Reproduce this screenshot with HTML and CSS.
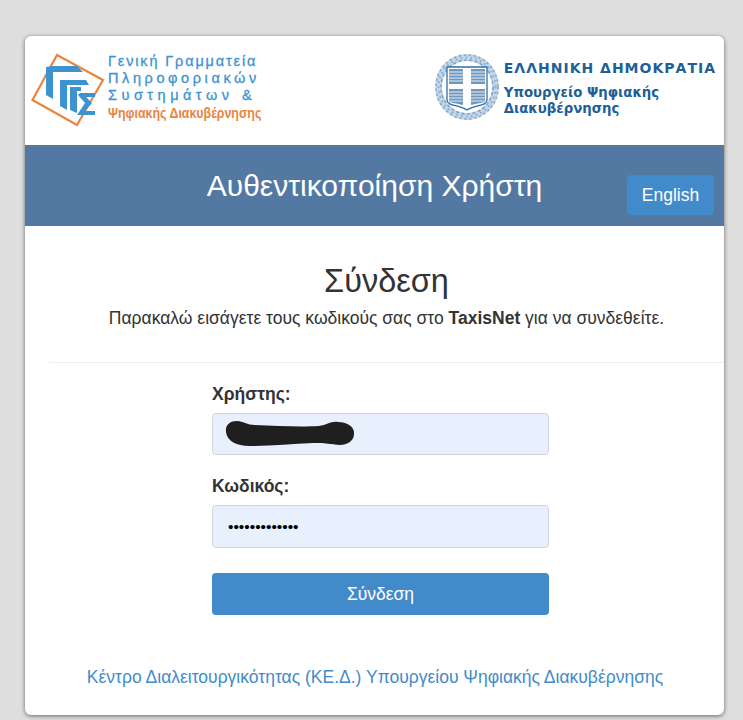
FILE: index.html
```html
<!DOCTYPE html>
<html lang="el">
<head>
    <meta charset="UTF-8">
    <meta name="viewport" content="width=device-width, initial-scale=1.0">
    <title>Αυθεντικοποίηση Χρήστη</title>
    <link rel="stylesheet" href="styles.css">
</head>
<body>
    <div class="card">
        <!-- Logos -->
        <div class="logos">
            <div class="logo-left">
                <svg class="gge-mark" width="76" height="74" viewBox="0 0 76 74">
                    <path d="M1.5 47 L26 2 L72 27 L46 72 Z" fill="none" stroke="#e8853f" stroke-width="2.2"/>
                    <path d="M15 14 L21 13 H46 L52 19 H22 V46 L15 42 Z" fill="#3d93d0"/>
                    <path d="M29 27 H55 L58 32 H36 V57 L29 53 Z" fill="#3d93d0"/>
                    <path d="M39 34 H50 V38 H46 V60 L39 57 Z" fill="#3d93d0"/>
                    <path d="M49 40 H64 V44 H55 L61 50 L54 58 H64 V62 H46 L54 50 L47 42 Z" fill="#3d93d0"/>
                </svg>
                <div class="gge-text">
                    <div class="gge-line gge-line-1">Γενική Γραμματεία</div>
                    <div class="gge-line gge-line-2">Πληροφοριακών</div>
                    <div class="gge-line gge-line-3">Συστημάτων &amp;</div>
                    <div class="gge-line gge-orange">Ψηφιακής Διακυβέρνησης</div>
                </div>
            </div>
            <div class="logo-right">
                <svg class="emblem" width="66" height="68" viewBox="0 0 66 68">
                    <ellipse cx="33" cy="34" rx="28.5" ry="29.5" fill="none" stroke="#c3d5e6" stroke-width="7"/>
                    <ellipse cx="33" cy="34" rx="31" ry="32" fill="none" stroke="#7fa5c8" stroke-width="1.6" stroke-dasharray="2 3"/>
                    <ellipse cx="33" cy="34" rx="28.5" ry="29.5" fill="none" stroke="#8aaccc" stroke-width="2" stroke-dasharray="1.5 3.5"/>
                    <ellipse cx="33" cy="34" rx="26" ry="27" fill="none" stroke="#7fa5c8" stroke-width="1.6" stroke-dasharray="3 2.5"/>
                    <path d="M13 14 H53 V47 C53 53 41 52 33 57 C25 52 13 53 13 47 Z" fill="#fff" stroke="#2f6ea3" stroke-width="1.3"/>
                    <path d="M15 16 H29 V31 H15 Z M37 16 H51 V31 H37 Z M15 36 H29 V52 L15 49 Z M37 36 H51 V49 L37 52 Z" fill="#6f98bf"/>
                    <path d="M15 19 H29 M15 22 H29 M15 25 H29 M15 28 H29 M37 19 H51 M37 22 H51 M37 25 H51 M37 28 H51 M15 39 H29 M15 42 H29 M15 45 H29 M15 48 H29 M37 39 H51 M37 42 H51 M37 45 H51 M37 48 H51" stroke="#e6eef6" stroke-width="1"/>
                </svg>
                <div class="gov-text">
                    <div class="gov-title">ΕΛΛΗΝΙΚΗ ΔΗΜΟΚΡΑΤΙΑ</div>
                    <div class="gov-sub">Υπουργείο Ψηφιακής<br>Διακυβέρνησης</div>
                </div>
            </div>
        </div>

        <!-- Title bar -->
        <div class="banner">
            <h1>Αυθεντικοποίηση Χρήστη</h1>
            <a class="lang-btn" href="#">English</a>
        </div>

        <div class="content">
            <h2>Σύνδεση</h2>
            <p class="intro">Παρακαλώ εισάγετε τους κωδικούς σας στο <b>TaxisNet</b> για να συνδεθείτε.</p>
            <hr>
            <form class="login-form" onsubmit="return false">
                <label for="username">Χρήστης:</label>
                <div class="field">
                    <input type="text" id="username">
                    <!-- blacked out username -->
                    <svg class="scribble" width="130" height="27" viewBox="0 0 130 27">
                        <path d="M1 12 C0 5 5 1 12 1 C18 1 22 5 30 5 C52 6 76 7 94 6 C102 5 106 1 113 2 C122 2 130 7 129 14 C129 21 122 25 115 25 C106 24 100 23 88 23 C66 24 46 26 24 26 C12 26 2 21 1 12 Z" fill="#1f1f1f"/>
                    </svg>
                </div>
                <label for="password">Κωδικός:</label>
                <input type="password" id="password" value="xxxxxxxxxxxxx">
                <button type="submit">Σύνδεση</button>
            </form>
            <a class="footer-link" href="#">Κέντρο Διαλειτουργικότητας (ΚΕ.Δ.) Υπουργείου Ψηφιακής Διακυβέρνησης</a>
        </div>
    </div>
</body>
</html>
```

FILE: styles.css
```css
html, body {
    height: 720px;
    overflow: hidden;
}
body {
    margin: 0;
    padding: 36px 19px 0 25px;
    background-color: #dedede;
    font-family: "Liberation Sans", Arial, sans-serif;
    color: #333;
}
.card {
    height: 679px;
    background-color: white;
    border-radius: 6px;
    box-shadow: 0 1px 4px rgba(0, 0, 0, 0.55);
    overflow: hidden;
}

/* Logos */
.logos {
    height: 109px;
    display: flex;
    justify-content: space-between;
    padding: 17px 8px 0 6px;
    box-sizing: border-box;
}
.logo-left, .logo-right {
    display: flex;
    align-items: flex-start;
}
.gge-mark {
    margin-right: 1px;
}
.gge-text {
    margin-top: 0;
    color: #3d93d0;
    font-size: 14.5px;
    line-height: 17px;
    white-space: nowrap;
    -webkit-text-stroke: 0.3px #3d93d0;
}
.gge-line-1 {
    letter-spacing: 1.85px;
}
.gge-line-2 {
    letter-spacing: 3.6px;
}
.gge-line-3 {
    letter-spacing: 4.5px;
}
.gge-orange {
    color: #e8853f;
    font-size: 15.5px;
    letter-spacing: 0;
    font-weight: 700;
    -webkit-text-stroke: 0;
    transform-origin: left center;
    transform: scaleX(0.8);
}
.emblem {
    margin: 0 4px 0 0;
}
.gov-text {
    color: #1d5f96;
    font-family: "DejaVu Sans", sans-serif;
    white-space: nowrap;
    font-weight: 700;
}
.gov-title {
    margin-top: 5px;
    font-size: 14px;
    line-height: 20px;
    letter-spacing: 1px;
}
.gov-sub {
    margin-top: 7px;
    font-size: 13.3px;
    line-height: 16px;
}

/* Title bar */
.banner {
    height: 81px;
    background-color: #5379a2;
    display: grid;
    grid-template-columns: 1fr auto 1fr;
    color: white;
}
.banner h1 {
    grid-column: 2;
    margin: 22px 0 0;
    font-size: 30px;
    line-height: 38px;
    font-weight: 400;
}
.lang-btn {
    grid-column: 3;
    justify-self: end;
    align-self: start;
    width: 87px;
    height: 40px;
    margin: 30px 10px 0 0;
    line-height: 40px;
    text-align: center;
    font-size: 17.5px;
    color: white;
    text-decoration: none;
    background-color: #428bca;
    border-radius: 4px;
}

/* Body */
.content {
    padding-left: 24px;
    text-align: center;
}
h2 {
    margin: 36px 0 0;
    font-size: 32.5px;
    line-height: 38px;
    font-weight: 400;
}
.intro {
    margin: 6px 0 0;
    font-size: 17.5px;
    line-height: 24px;
}
hr {
    margin: 32px 0 0;
    border: 0;
    border-top: 1px solid #eee;
}
.login-form {
    width: 337px;
    margin: 20px 0 0 163px;
    text-align: left;
    display: flex;
    flex-direction: column;
}
label {
    font-size: 17.5px;
    line-height: 22px;
    font-weight: 700;
    margin-bottom: 8px;
}
.field {
    position: relative;
    margin-bottom: 20px;
}
input {
    display: block;
    width: 100%;
    height: 42px;
    box-sizing: border-box;
    padding: 6px 15px;
    font-size: 15.5px;
    background-color: #e8f0fe;
    border: 1px solid #cfd4dc;
    border-radius: 4px;
}
#password {
    height: 43px;
}
.scribble {
    position: absolute;
    left: 13px;
    top: 7px;
}
button {
    height: 42px;
    margin-top: 25px;
    font-family: inherit;
    font-size: 17.5px;
    color: white;
    background-color: #428bca;
    border: none;
    border-radius: 4px;
}
.footer-link {
    display: block;
    margin-top: 51px;
    padding-right: 23px;
    font-size: 17.5px;
    line-height: 22px;
    color: #428bca;
    text-decoration: none;
    white-space: nowrap;
}
```
